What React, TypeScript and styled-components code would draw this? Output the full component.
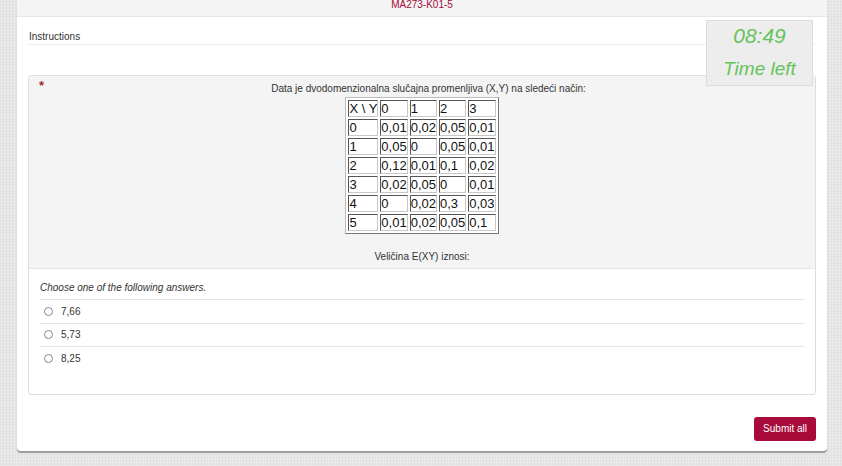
import React from 'react'
import styled, { createGlobalStyle } from 'styled-components'

const GlobalStyle = createGlobalStyle`
  html, body {
    margin: 0;
    padding: 0;
  }
  body {
    width: 842px;
    height: 466px;
    overflow: hidden;
    font-family: "Liberation Sans", Arial, sans-serif;
    font-size: 10px;
    color: #333;
    background-color: #e6e6e6;
    background-image:
      repeating-linear-gradient(0deg, rgba(255,255,255,0.25) 0 1px, transparent 1px 3px),
      repeating-linear-gradient(90deg, rgba(0,0,0,0.03) 0 1px, transparent 1px 3px);
  }
`

const Page = styled.div`
  padding: 0 15px 0 17px;
`

const Card = styled.div`
  position: relative;
  width: 810px;
  background: #fff;
  border-radius: 0 0 4px 4px;
  box-shadow: 0 2px 1px #9a9a9a;
`

const TestHeader = styled.div`
  height: 16px;
  background: #f4f4f4;
  border-bottom: 1px solid #e6e6e6;
  color: #a50b3a;
  text-align: center;
  line-height: 10px;
`

const CardBody = styled.div`
  padding: 0 11px 10px;
`

const InstructionsRow = styled.div`
  margin-top: 12px;
  height: 15px;
  line-height: 15px;
  padding-left: 1px;
  border-bottom: 1px solid #eee;
  color: #333;
`

const Timer = styled.div`
  position: absolute;
  z-index: 2;
  left: 689px;
  top: 20px;
  width: 105px;
  height: 64px;
  background: rgba(236, 236, 236, 0.92);
  border: 1px solid #dcdcdc;
  color: #66c35a;
  font-style: italic;
  text-align: center;
`

const TimerValue = styled.div`
  font-size: 21px;
  line-height: 24px;
  margin-top: 3px;
`

const TimerLabel = styled.div`
  font-size: 19px;
  line-height: 22px;
  margin-top: 10px;
`

const QuestionPanel = styled.div`
  position: relative;
  margin-top: 30px;
  border: 1px solid #dedede;
  border-radius: 3px;
  overflow: hidden;
`

const Required = styled.span`
  position: absolute;
  left: 10px;
  top: 2px;
  color: #a52a2a;
  font-size: 13px;
  font-weight: bold;
`

const QuestionBody = styled.div`
  background: #f4f4f4;
  border-bottom: 1px solid #e4e4e4;
  padding: 6px 12px 4px;
  text-align: center;
`

const Prompt = styled.div<{ $gap?: number }>`
  line-height: 14px;
  margin-top: ${p => p.$gap ?? 0}px;
  padding-left: ${p => (p.$gap ? 0 : 13)}px;
`

const DataTable = styled.table`
  margin: 1px auto 0;
  border: 1px solid;
  border-color: #bbb #777 #777 #bbb;
  border-spacing: 2px;
  background: #fff;
  font-size: 13px;
  color: #111;
  text-align: left;
`

const Cell = styled.td`
  border: 1px solid;
  border-color: #555 #c8c8c8 #c8c8c8 #555;
  padding: 0;
  line-height: 15px;
  white-space: nowrap;
`

const Answers = styled.div`
  padding: 12px 10px 23px 11px;
`

const Hint = styled.div`
  font-style: italic;
  line-height: 14px;
  padding-bottom: 4px;
  border-bottom: 1px solid #e6e6e6;
`

const Option = styled.label<{ $last?: boolean }>`
  display: flex;
  align-items: center;
  gap: 8px;
  height: 22.5px;
  padding-left: 4px;
  border-bottom: 1px solid ${p => (p.$last ? 'transparent' : '#e6e6e6')};
`

const Radio = styled.span`
  width: 7px;
  height: 7px;
  border: 1px solid #888;
  border-radius: 50%;
  background: #fff;
`

const Footer = styled.div`
  display: flex;
  justify-content: flex-end;
  margin-top: 22px;
`

const SubmitButton = styled.button`
  height: 24px;
  padding: 0 9px;
  border: none;
  border-radius: 3px;
  background: #a80a3a;
  color: #fff;
  font-family: "Liberation Sans", Arial, sans-serif;
  font-size: 10px;
`

const rows = [
  ['X \\ Y', '0', '1', '2', '3'],
  ['0', '0,01', '0,02', '0,05', '0,01'],
  ['1', '0,05', '0', '0,05', '0,01'],
  ['2', '0,12', '0,01', '0,1', '0,02'],
  ['3', '0,02', '0,05', '0', '0,01'],
  ['4', '0', '0,02', '0,3', '0,03'],
  ['5', '0,01', '0,02', '0,05', '0,1'],
]

const answers = ['7,66', '5,73', '8,25']

function App() {
  return (
    <Page>
      <GlobalStyle />
      <Card>
        <TestHeader>MA273-K01-5</TestHeader>
        <Timer>
          <TimerValue>08:49</TimerValue>
          <TimerLabel>Time left</TimerLabel>
        </Timer>
        <CardBody>
          <InstructionsRow>Instructions</InstructionsRow>
          <QuestionPanel>
            <Required>*</Required>
            <QuestionBody>
              <Prompt>Data je dvodomenzionalna slučajna promenljiva (X,Y) na sledeći način:</Prompt>
              <DataTable>
                <tbody>
                  {rows.map((r, i) => (
                    <tr key={i}>
                      {r.map((c, j) => (
                        <Cell key={j}>{c}</Cell>
                      ))}
                    </tr>
                  ))}
                </tbody>
              </DataTable>
              <Prompt $gap={16}>Veličina E(XY) iznosi:</Prompt>
            </QuestionBody>
            <Answers>
              <Hint>Choose one of the following answers.</Hint>
              {answers.map((a, i) => (
                <Option key={a} $last={i === answers.length - 1}>
                  <Radio />
                  {a}
                </Option>
              ))}
            </Answers>
          </QuestionPanel>
          <Footer>
            <SubmitButton>Submit all</SubmitButton>
          </Footer>
        </CardBody>
      </Card>
    </Page>
  )
}

export default App
